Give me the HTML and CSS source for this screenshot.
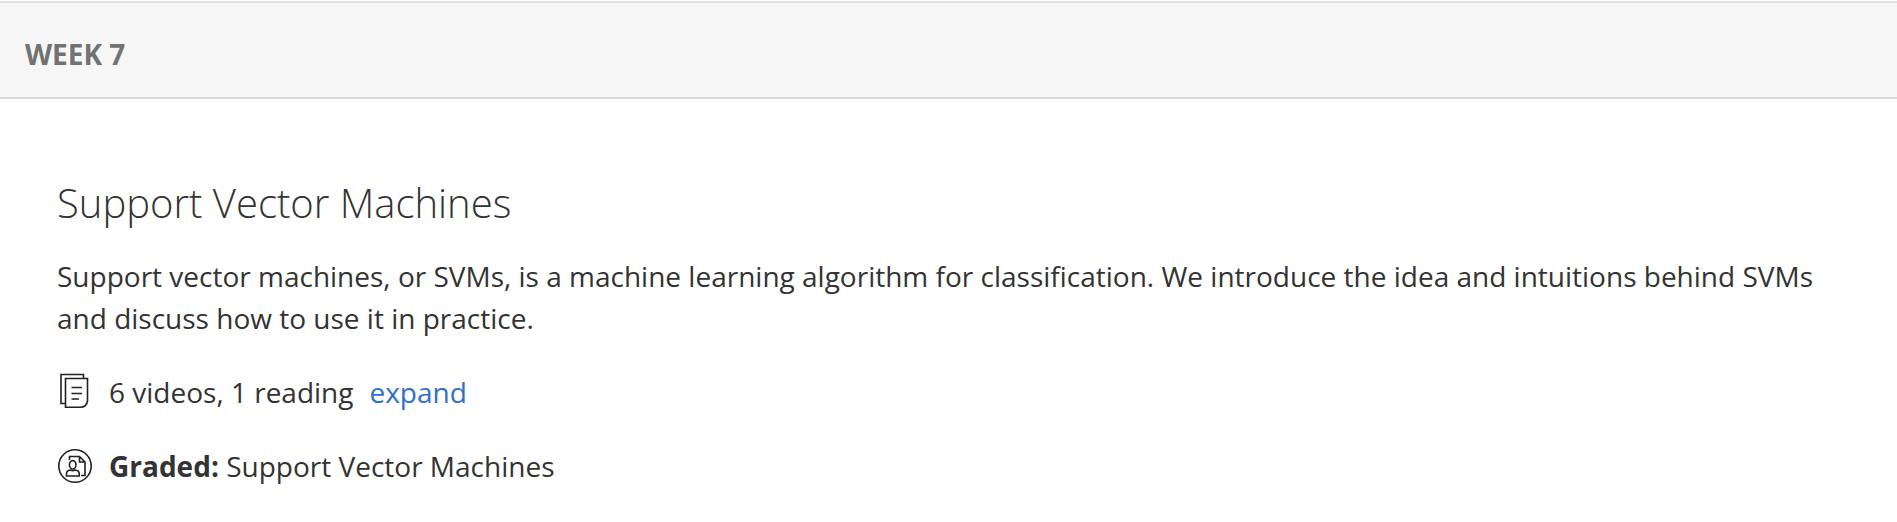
FILE: index.html
```html
<!DOCTYPE html>
<html lang="en"><head><meta charset="utf-8"><title>Week 7</title><link rel="stylesheet" href="styles.css"></head>
<body>
<header class="week">WEEK 7</header>
<main class="module">
<h2 class="title">Support Vector Machines</h2>
<p class="desc">Support vector machines, or SVMs, is a machine learning algorithm for classification. We introduce the idea and intuitions behind SVMs<br>and discuss how to use it in practice.</p>
<div class="row"><svg class="icon" viewBox="0 0 36 36"><path d="M8.500 29.500H4V.500h22.500V4.500M8.500 4.500h22V27q-1 6.300-7 6.300h-15zM14.500 13.500h10.500M14.500 19.500h10.500M14.500 25h7.500"/></svg><span>6 videos, 1 reading</span><a class="expand">expand</a></div>
<div class="row"><svg class="icon" viewBox="0 0 36 36"><circle cx="18" cy="18" r="16.200"/><path d="M12.500 12V8.500h10l5.500 5.500V27.500h-4M22.500 8.500V14H28"/><ellipse cx="15.700" cy="16.800" rx="3.300" ry="4.200"/><path d="M9.500 28v-2.500q0-3 4-3.500 2.300 1.300 4.500 0 4.200.5 4.200 3.500V28z"/></svg><span><b>Graded:</b> Support Vector Machines</span></div>
</main></body></html>
```
FILE: styles.css
```css
* { box-sizing: border-box; }
body { margin: 0; padding-top: 1px; background: #fff; color: #333; font-family: "Open Sans", sans-serif; font-size: 28px; line-height: 42px; }
.week { height: 98px; padding: 30px 25px 0; background: #f6f6f6; border-top: 2px solid #e1e1e1; border-bottom: 2px solid #dadada; color: #727272; font-weight: 700; }
.module { padding: 77px 57px 0; }
.title { margin: 0; font-weight: 300; font-size: 40px; line-height: 54px; }
.desc { margin: 25px 0 0; white-space: nowrap; }
.row { display: flex; align-items: center; height: 42px; margin-top: 32px; }
.icon { width: 36px; height: 36px; margin-right: 16px; overflow: visible; fill: none; stroke: #222; stroke-width: 1.6; }
.expand { margin-left: 16px; color: #3070cc; }
```
